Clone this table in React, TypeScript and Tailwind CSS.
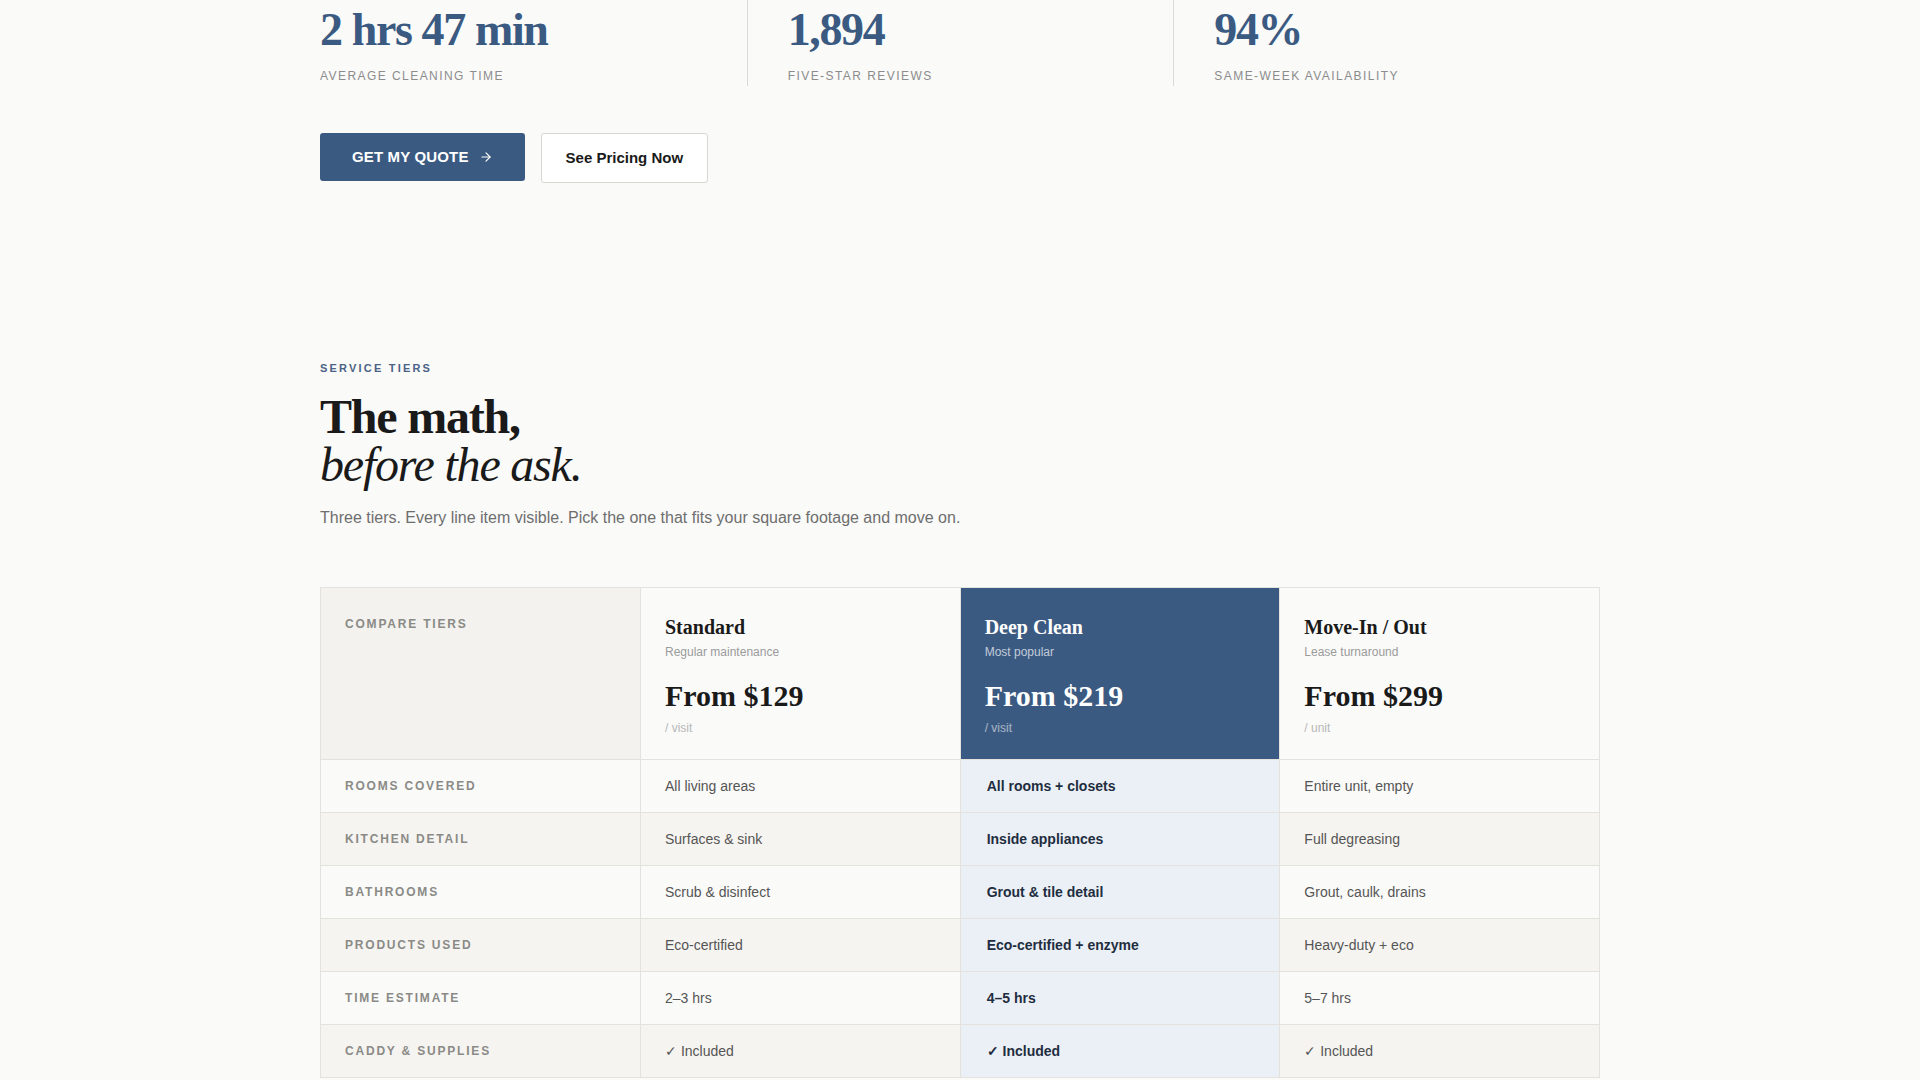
import { ArrowRight } from 'lucide-react';

type Stat = { value: string; label: string };

type Tier = {
  name: string;
  note: string;
  price: string;
  unit: string;
  hot?: boolean;
};

type Row = { label: string; values: [string, string, string] };

const stats: Stat[] = [
  { value: '2 hrs 47 min', label: 'Average cleaning time' },
  { value: '1,894', label: 'Five-star reviews' },
  { value: '94%', label: 'Same-week availability' },
];

const tiers: Tier[] = [
  { name: 'Standard', note: 'Regular maintenance', price: 'From $129', unit: '/ visit' },
  { name: 'Deep Clean', note: 'Most popular', price: 'From $219', unit: '/ visit', hot: true },
  { name: 'Move-In / Out', note: 'Lease turnaround', price: 'From $299', unit: '/ unit' },
];

const rows: Row[] = [
  { label: 'Rooms covered', values: ['All living areas', 'All rooms + closets', 'Entire unit, empty'] },
  { label: 'Kitchen detail', values: ['Surfaces & sink', 'Inside appliances', 'Full degreasing'] },
  { label: 'Bathrooms', values: ['Scrub & disinfect', 'Grout & tile detail', 'Grout, caulk, drains'] },
  { label: 'Products used', values: ['Eco-certified', 'Eco-certified + enzyme', 'Heavy-duty + eco'] },
  { label: 'Time estimate', values: ['2–3 hrs', '4–5 hrs', '5–7 hrs'] },
  { label: 'Caddy & supplies', values: ['✓ Included', '✓ Included', '✓ Included'] },
];

const TierHead = ({ name, note, price, unit, hot }: Tier) => (
  <div
    className={
      hot
        ? 'border-l border-[#e4e2dd] bg-[#3b5a82] px-6 pt-[29px] pb-[23px] text-white'
        : 'border-l border-[#e4e2dd] bg-[#fafaf9] px-6 pt-[29px] pb-[23px] text-[#1a1a1a]'
    }
  >
    <h3 className="font-['Liberation_Serif','Times_New_Roman',serif] text-[20px] leading-none font-bold">
      {name}
    </h3>
    <p className={hot ? 'mt-[7px] text-xs leading-4 text-white/70' : 'mt-[7px] text-xs leading-4 text-[#9b9b9b]'}>
      {note}
    </p>
    <p className="mt-[21px] font-['Liberation_Serif','Times_New_Roman',serif] text-[30px] leading-none font-bold">
      {price}
    </p>
    <p className={hot ? 'mt-[9px] text-xs leading-4 text-white/55' : 'mt-[9px] text-xs leading-4 text-[#b8b8b8]'}>
      {unit}
    </p>
  </div>
);

export default function App() {
  return (
    <div className="min-h-screen bg-[#fafaf9] font-['Liberation_Sans',Arial,sans-serif] text-[#1a1a1a]">
      <div className="mx-auto w-[1280px] pb-32">
        {/* stats strip, page is scrolled so only the tail shows */}
        <div className="grid grid-cols-3">
          {stats.map((s, i) => (
            <div
              key={s.label}
              className={i === 0 ? 'pt-[7px] pb-[2px]' : 'border-l border-[#dcdad5] pt-[7px] pb-[2px] pl-10'}
            >
              <div className="font-['Liberation_Serif','Times_New_Roman',serif] text-[46px] leading-none font-bold tracking-[-0.03em] text-[#3b5a82]">
                {s.value}
              </div>
              <div className="mt-[15px] text-xs leading-4 tracking-[0.12em] text-[#8c8c8c] uppercase">
                {s.label}
              </div>
            </div>
          ))}
        </div>

        <div className="mt-[47px] flex items-start gap-4">
          <button className="flex h-12 items-center gap-2.5 rounded-[3px] bg-[#3b5a82] px-8 text-[15px] font-bold tracking-[0.01em] text-white uppercase">
            Get my quote
            <ArrowRight size={14} strokeWidth={2} />
          </button>
          <button className="h-[50px] rounded-[3px] border border-[#d9d7d2] bg-white px-6 text-[15px] font-bold text-[#1a1a1a]">
            See Pricing Now
          </button>
        </div>

        <section className="mt-[177px]">
          <p className="text-[11px] leading-4 font-bold tracking-[0.2em] text-[#4a6285] uppercase">Service tiers</p>
          <h2 className="mt-[17px] font-['Liberation_Serif','Times_New_Roman',serif] text-[48px] leading-none tracking-tight text-[#1a1a1a]">
            <span className="block font-bold">The math,</span>
            <span className="block italic">before the ask.</span>
          </h2>
          <p className="mt-[17px] text-base leading-6 text-[#6e6e6e]">
            Three tiers. Every line item visible. Pick the one that fits your square footage and move on.
          </p>

          <div className="mt-[57px] border border-[#e4e2dd]">
            <div className="grid grid-cols-[319px_1fr_1fr_1fr]">
              <div className="bg-[#f3f2ee] px-6 pt-7 text-xs leading-4 font-bold tracking-[0.15em] text-[#8a8a86] uppercase">
                Compare tiers
              </div>
              {tiers.map((t) => (
                <TierHead key={t.name} {...t} />
              ))}
            </div>

            {rows.map((r, i) => (
              <div key={r.label} className="grid grid-cols-[319px_1fr_1fr_1fr] border-t border-[#e4e2dd]">
                <div
                  className={
                    i % 2 === 0
                      ? 'flex h-[52px] items-center bg-[#fafaf9] px-6 text-xs font-bold tracking-[0.15em] text-[#8a8a86] uppercase'
                      : 'flex h-[52px] items-center bg-[#f5f4f0] px-6 text-xs font-bold tracking-[0.15em] text-[#8a8a86] uppercase'
                  }
                >
                  {r.label}
                </div>
                {r.values.map((v, j) =>
                  j === 1 ? (
                    <div
                      key={j}
                      className="flex h-[52px] items-center border-l border-[#e4e2dd] bg-[#ebf0f6] pr-6 pl-[26px] text-sm font-bold text-[#1f2d40]"
                    >
                      {v}
                    </div>
                  ) : (
                    <div
                      key={j}
                      className={
                        i % 2 === 0
                          ? 'flex h-[52px] items-center border-l border-[#e4e2dd] bg-[#fafaf9] px-6 text-sm text-[#555555]'
                          : 'flex h-[52px] items-center border-l border-[#e4e2dd] bg-[#f5f4f0] px-6 text-sm text-[#555555]'
                      }
                    >
                      {v}
                    </div>
                  ),
                )}
              </div>
            ))}
          </div>
        </section>
      </div>
    </div>
  );
}
